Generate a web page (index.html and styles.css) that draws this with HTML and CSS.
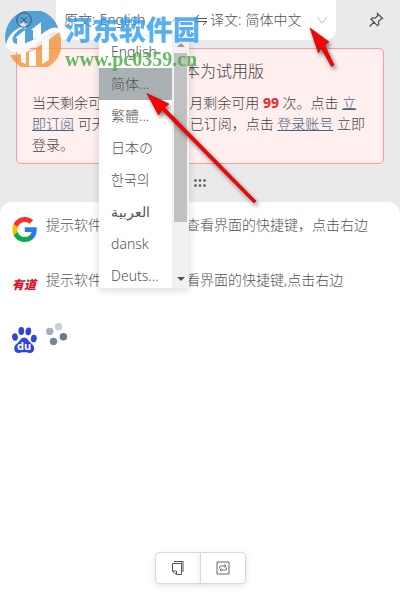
FILE: index.html
```html
<!DOCTYPE html>
<html lang="zh-CN">
<head>
    <meta charset="UTF-8">
    <title>翻译</title>
    <link rel="stylesheet" href="styles.css">
</head>
<body>
<div class="wrap">
    <header class="header">
        <button type="button" class="iconBtn close" aria-label="关闭">
            <svg width="16" height="16" viewBox="0 0 16 16" fill="none" stroke="#444"><circle cx="8" cy="8" r="7.3"/><path d="M5 5l6 6M11 5l-6 6"/></svg>
        </button>
        <div class="langs">
            <div class="lang from">
                <label for="from">原文:</label>
                <select id="from"><option>English</option></select>
                <svg class="arrow" width="12" height="8" viewBox="0 0 12 8" fill="none" stroke="#bbb"><path d="M1 7l5-6 5 6"/></svg>
                <ul class="list" role="listbox" aria-label="原文">
                    <li role="option">English</li>
                    <li role="option" class="active" aria-selected="true">简体...</li>
                    <li role="option">繁體...</li>
                    <li role="option" lang="ja">日本の</li>
                    <li role="option" lang="ko">한국의</li>
                    <li role="option"><bdi>العربية</bdi></li>
                    <li role="option">dansk</li>
                    <li role="option">Deuts...</li>
                </ul>
                <div class="scroll">
                    <svg width="17" height="17" viewBox="0 0 17 17"><path d="M5 11l4-4 4 4z" fill="#999"/></svg>
                    <div class="thumb"></div>
                    <svg width="17" height="17" viewBox="0 0 17 17"><path d="M5 6l4 4 4-4z" fill="#505050"/></svg>
                </div>
            </div>
            <button type="button" class="iconBtn swap" aria-label="交换">
                <svg width="14" height="14" viewBox="0 0 14 14" fill="none" stroke="#555"><path d="M5 2L1 5.500h12M9 12l4-3.500H1"/></svg>
            </button>
            <div class="lang to">
                <label for="to">译文:</label>
                <select id="to"><option>简体中文</option></select>
                <svg class="arrow" width="12" height="8" viewBox="0 0 12 8" fill="none" stroke="#bbb"><path d="M1 1l5 6 5-6"/></svg>
            </div>
        </div>
        <button type="button" class="iconBtn" aria-label="固定">
            <svg width="16" height="16" viewBox="0 0 16 16" fill="none" stroke="#555" stroke-width="1.300"><path d="M9.500 1.500l5 5-1.500.5-2.500 2.500.2 3-1.200 1.200L3 7.200 4.200 6l3 .2 2.500-2.500zM5.800 10.200L1.500 14.500"/></svg>
        </button>
    </header>

    <section class="tips">
        <h1>当前版本为试用版</h1>
        <p>当天剩余可用 499 次，本月剩余可用 <b>99</b> 次。点击 <a href="#">立即订阅</a> 可无限次使用。如已订阅，点击 <a href="#">登录账号</a> 立即登录。</p>
    </section>

    <div class="grip">
        <svg width="12" height="8" viewBox="0 0 12 8" fill="#555"><circle cx="1.500" cy="1.500" r="1.300"/><circle cx="6" cy="1.500" r="1.300"/><circle cx="10.500" cy="1.500" r="1.300"/><circle cx="1.500" cy="6.500" r="1.300"/><circle cx="6" cy="6.500" r="1.300"/><circle cx="10.500" cy="6.500" r="1.300"/></svg>
    </div>

    <main class="result">
        <div class="row">
            <svg width="25" height="25" viewBox="0 0 48 48"><path fill="#2a7de9" d="M47.500 24.500c0-1.600-.1-3.200-.4-4.700H24.500v9.100h13c-.6 3-2.300 5.500-4.800 7.200v6h7.800c4.500-4.200 7-10.300 7-17.600z"/><path fill="#0da94e" d="M24.500 48c6.500 0 11.900-2.100 15.900-5.800l-7.700-6c-2.200 1.500-4.900 2.300-8.200 2.300-6.300 0-11.500-4.200-13.400-9.900H3.200v6.200C7.200 42.600 15.200 48 24.500 48z"/><path fill="#fbbc05" d="M11.100 28.600c-1-3-1-6.200 0-9.200v-6.200H3.200c-3.300 6.800-3.300 14.900 0 21.600z"/><path fill="#f33129" d="M24.500 9.500c3.400 0 6.700 1.200 9.200 3.600l6.800-6.800C36.200 2.200 30.500 0 24.500 0 15.200 0 7.200 5.400 3.200 13.200l7.900 6.200c1.900-5.700 7.100-9.900 13.400-9.900z"/></svg>
            <p>提示软件支持用户自行查看界面的快捷键，点击右边</p>
        </div>
        <div class="row">
            <span class="youdao">有道</span>
            <p>提示软件中支持用户查看界面的快捷键,点击右边</p>
        </div>
        <div class="row">
            <svg width="25" height="26" viewBox="0 0 25 26" fill="#2f45df"><ellipse cx="9.300" cy="4" rx="2.900" ry="4"/><ellipse cx="16.400" cy="4.400" rx="2.800" ry="3.900" transform="rotate(10 16 4)"/><ellipse cx="3" cy="10" rx="2.900" ry="3.800" transform="rotate(-10 3 10)"/><ellipse cx="21.700" cy="11.600" rx="2.900" ry="3.800" transform="rotate(12 22 12)"/><path d="M12.200 10.500c2.500 0 3.800 2.300 5.200 4 1.600 2 4.800 3.500 4.800 7 0 2.800-1.800 4.500-4.500 4.500-2 0-3.200-.7-5.500-.7s-3.500.7-5.500.7C4 26 2.200 24.300 2.200 21.500c0-3.500 3.200-5 4.800-7 1.400-1.700 2.700-4 5.200-4z"/><text class="du" x="12" y="23">du</text></svg>
            <svg class="loading" width="23" height="23" viewBox="0 0 23 23" fill="#66798d"><circle cx="12.600" cy="3.800" r="3.700" opacity=".35"/><circle cx="3.700" cy="8.500" r="3.700" opacity=".6"/><circle cx="17.400" cy="13.700" r="3.700"/><circle cx="7.500" cy="18.500" r="3.700" opacity=".9"/></svg>
        </div>
    </main>

    <footer class="tools">
        <button type="button" aria-label="复制">
            <svg width="14" height="16" viewBox="0 0 14 16"><path d="M10 2h3v10h-2v2h-1z" fill="#aaa"/><path d="M3 1.500h9.500M4 3.500h6.500v11H5.500l-4-3v-8H4M2 11h3.500v3.500" fill="none" stroke="#555"/></svg>
        </button>
        <button type="button" aria-label="替换">
            <svg width="14" height="14" viewBox="0 0 14 14" fill="none" stroke="#666"><path d="M1 1h12v12H1z"/><path d="M3.500 7.500V6L4.500 5H10M8.500 3.500L10 5 8.500 6.500M10.500 6.500V8l-1 1H4M5.500 7.500L4 9l1.500 1.500"/></svg>
        </button>
    </footer>
</div>

<!-- 水印 -->
<div class="mark">
    <svg width="56" height="56" viewBox="0 0 56 56">
        <path d="M1 33A27 27 0 0 1 54 19C46 14 40 25 30 30 18 38 6 40 1 33z" fill="#2f8fd0"/>
        <path d="M5 44C20 45 38 34 54 21A27 27 0 0 1 5 44z" fill="#f7953a"/>
        <path d="M1 34C3 23 11 17 20 15 9 21 5 28 9 32c8 4 20-3 29-10 7-5 13-8 17-3-10 1-20 12-29 18C15 43 4 43 1 34z" fill="#fff"/>
        <path d="M12 34v-7h-2l10-8v15zM24 53V41l7-3v17h-7zM28 28v-9h-2l10-8v14zM37 53V30l7-5v24zM16 41h5v12l-5-2z" fill="#fff"/>
        <path d="M18 10l1.500 2.500 3 0-2 2.500 1 3-3.500-1-3 1 1-3-2-2.500 3 0z" fill="#fff" opacity=".8"/>
    </svg>
    <div>
        <strong>河东软件园</strong>
        <span>www.pc0359.cn</span>
    </div>
</div>

<!-- 指示箭头 -->
<svg class="point" width="400" height="220" viewBox="0 0 400 220">
    <g fill="#f00" stroke="#a40000" stroke-width=".6"><path d="M147 93.500l22 10.500-4.500 3.500 91.500 93.500-2 2-92-93-3.500 5z"/><path d="M310 28l19 14-4.500 3 9.500 20-2.500 1.500L321 48l-2.500 5z"/></g>
</svg>
</body>
</html>
```

FILE: styles.css
```css
* {
    box-sizing: border-box;
}
body {
    margin: 0;
    font: 14px/22px "Noto Sans", "Noto Sans CJK SC", sans-serif;
    font-weight: 300;
    color: #555;
    background: #eaeaea;
}
h1, p, ul {
    margin: 0;
    padding: 0;
}
button, select {
    padding: 0;
    border: 0;
    font: inherit;
    color: inherit;
    background: none;
}
svg {
    display: block;
}
.wrap {
    display: flex;
    flex-direction: column;
    min-height: 100vh;
}
.header {
    display: flex;
    align-items: center;
    height: 40px;
    padding: 0 16px;
}
.iconBtn {
    flex: none;
    cursor: pointer;
}
/* 关闭按钮在水印上层 */
.close {
    position: relative;
    z-index: 4;
    opacity: .8;
}
.langs {
    display: flex;
    flex: 1;
    align-items: center;
    justify-content: space-between;
    height: 40px;
    margin: 0 32px 0 24px;
    padding: 0 8px;
    border-radius: 0 0 10px 10px;
    background: #fff;
}
.lang {
    position: relative;
    display: flex;
    align-items: center;
    gap: 4px;
    width: 118px;
}
.lang label {
    flex: none;
}
.lang select {
    flex: 1;
    min-width: 0;
    appearance: none;
}
.arrow {
    flex: none;
}
.swap {
    margin-left: 10px;
}
/* 下拉列表 */
.list {
    position: absolute;
    z-index: 1;
    top: 27px;
    left: 35px;
    width: 90px;
    height: 252px;
    overflow: hidden;
    list-style: none;
    border-radius: 4px;
    background: #fff;
    box-shadow: 0 2px 8px rgba(0, 0, 0, .16);
}
.list li {
    padding: 0 12px;
    line-height: 32px;
    white-space: nowrap;
}
.list .active {
    background: #a9b1b4;
}
.scroll {
    position: absolute;
    z-index: 2;
    top: 27px;
    left: 108px;
    display: flex;
    flex-direction: column;
    width: 17px;
    height: 252px;
    background: #f1f1f1;
}
.thumb {
    height: 169px;
    margin: 0 2px auto;
    background: #c1c1c1;
}
/* 试用提示 */
.tips {
    margin: 8px 16px 0;
    padding: 10px 15px 8px;
    border: 1px solid #ff9c9c;
    border-radius: 4px;
    color: #444;
    background: #ffefef;
}
.tips h1 {
    margin-bottom: 9px;
    font-size: 16px;
    font-weight: 300;
    line-height: 24px;
    text-align: center;
}
.tips p {
    line-height: 21px;
}
.tips b {
    font-weight: bold;
    color: #f5222d;
}
.tips a {
    color: #48617b;
}
.grip {
    display: flex;
    align-items: center;
    justify-content: center;
    height: 38px;
}
/* 翻译结果 */
.result {
    flex: 1;
    padding: 12px;
    border-radius: 12px 12px 0 0;
    background: #fff;
}
.row {
    display: flex;
    gap: 9px;
    height: 55px;
}
.row svg {
    flex: none;
    margin-top: 3px;
}
.row .loading {
    margin: -1px 0 0;
}
.youdao {
    flex: none;
    width: 25px;
    padding-top: 5px;
    font-size: 12px;
    font-style: italic;
    font-weight: 900;
    color: #d8122b;
}
.du {
    font: bold 11px "Noto Sans", sans-serif;
    text-anchor: middle;
    fill: #fff;
}
.tools {
    display: flex;
    justify-content: center;
    padding-bottom: 16px;
    background: #fff;
}
.tools button {
    display: flex;
    align-items: center;
    justify-content: center;
    width: 46px;
    height: 32px;
    border: 1px solid #d9d9d9;
    border-radius: 4px 0 0 4px;
    background: #fff;
    box-shadow: 0 2px 6px rgba(0, 0, 0, .1);
}
.tools button + button {
    margin-left: -1px;
    border-radius: 0 4px 4px 0;
}
.mark {
    position: absolute;
    z-index: 3;
    top: 11px;
    left: 5px;
    display: flex;
    gap: 4px;
    opacity: .8;
    pointer-events: none;
}
.mark strong {
    display: block;
    font-size: 27px;
    font-weight: 900;
    line-height: 38px;
    color: #2f9cf0;
}
.mark span {
    display: block;
    font: bold 20px/20px "Liberation Serif", serif;
    color: #44aa3c;
}
.point {
    position: absolute;
    z-index: 5;
    top: 0;
    left: 0;
    pointer-events: none;
    filter: drop-shadow(2px 3px 2px rgba(0, 0, 0, .5));
}
```
